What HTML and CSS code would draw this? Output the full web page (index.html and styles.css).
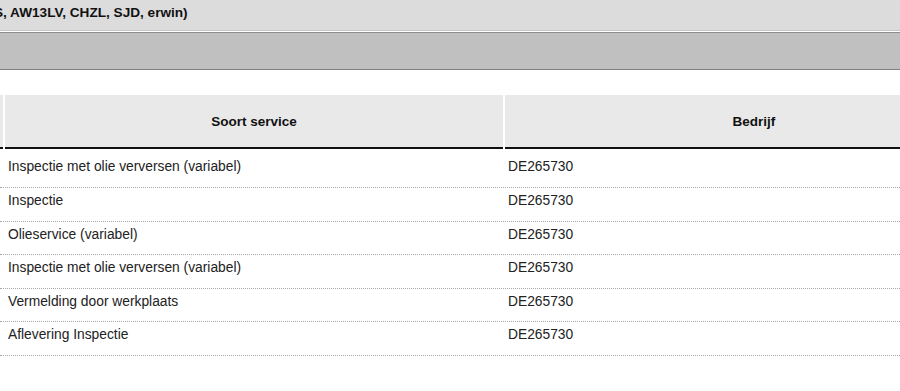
FILE: index.html
```html
<!DOCTYPE html>
<html lang="nl">
<head>
<meta charset="utf-8">
<title>Service historie</title>
<link rel="stylesheet" href="styles.css">
</head>
<body>
<div class="page">
  <div class="topbar"><span class="title">S, AW13LV, CHZL, SJD, erwin)</span></div>
  <div class="band"></div>
  <div class="grid">
    <div class="row head">
      <div class="cell stub"></div>
      <div class="cell">Soort service</div>
      <div class="cell">Bedrijf</div>
    </div>
    <div class="row body first">
      <div class="cell stub"></div>
      <div class="cell">Inspectie met olie verversen (variabel)</div>
      <div class="cell">DE265730</div>
    </div>
    <div class="row body">
      <div class="cell stub"></div>
      <div class="cell">Inspectie</div>
      <div class="cell">DE265730</div>
    </div>
    <div class="row body">
      <div class="cell stub"></div>
      <div class="cell">Olieservice (variabel)</div>
      <div class="cell">DE265730</div>
    </div>
    <div class="row body">
      <div class="cell stub"></div>
      <div class="cell">Inspectie met olie verversen (variabel)</div>
      <div class="cell">DE265730</div>
    </div>
    <div class="row body">
      <div class="cell stub"></div>
      <div class="cell">Vermelding door werkplaats</div>
      <div class="cell">DE265730</div>
    </div>
    <div class="row body">
      <div class="cell stub"></div>
      <div class="cell">Aflevering Inspectie</div>
      <div class="cell">DE265730</div>
    </div>
  </div>
</div>
</body>
</html>
```
FILE: styles.css
```css
html, body {
  margin: 0;
  padding: 0;
  background: #ffffff;
  overflow: hidden;
}
.page {
  width: 900px;
  overflow: hidden;
  font-family: "Liberation Sans", Arial, sans-serif;
  color: #1a1a1a;
}
.topbar {
  height: 25px;
  padding-top: 5px;
  background: #dcdcdc;
  border-bottom: 1px solid #c6c6c6;
  white-space: nowrap;
}
.title {
  display: block;
  margin-left: -6px;
  font-weight: bold;
  font-size: 13.6px;
  line-height: 15px;
  color: #111;
}
.band {
  margin-top: 1px;
  height: 36px;
  background: #c0c0c0;
  border-top: 1px solid #8c8c8c;
  border-bottom: 1px solid #808080;
}
.grid {
  margin-top: 25px;
  width: 1010px;
}
.row {
  display: grid;
  grid-template-columns: 3px 498px 498px;
  column-gap: 2px;
}
.head .cell {
  height: 52px;
  background: #e9e9e9;
  border-bottom: 2px solid #111;
  display: flex;
  align-items: center;
  justify-content: center;
  font-weight: bold;
  font-size: 13.5px;
  color: #111;
}
.body {
  border-bottom: 1px dotted #a8a8a8;
  width: 900px;
  grid-template-columns: 3px 498px 395px;
}
.body .cell {
  padding: 5px 0 12.6px 3px;
  font-size: 13.8px;
  line-height: 15px;
  white-space: nowrap;
  color: #222;
}
.body .cell.stub {
  padding-left: 0;
}
.body.first .cell {
  padding-top: 10px;
  padding-bottom: 13px;
}
```
